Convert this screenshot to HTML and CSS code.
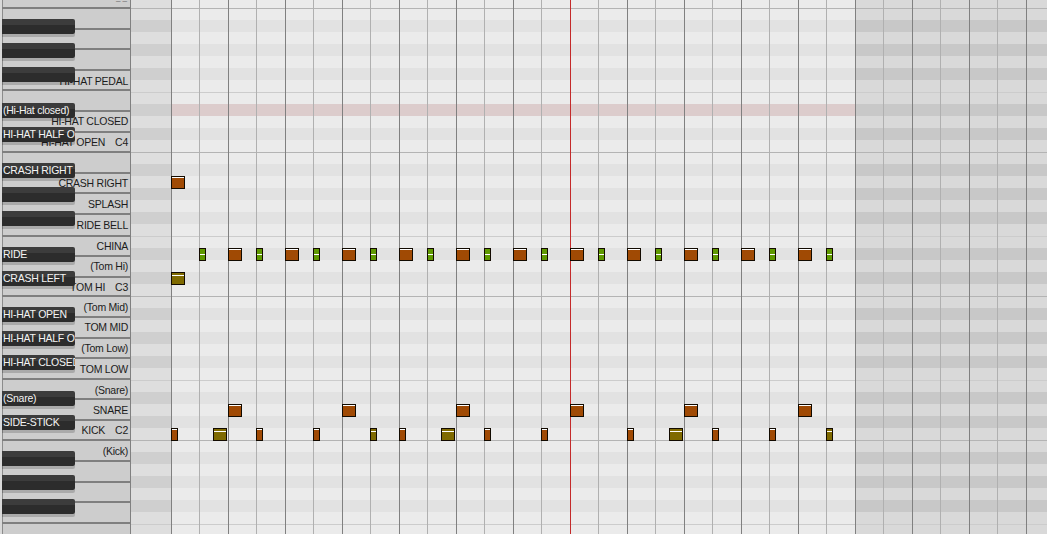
FILE: index.html
```html
<!DOCTYPE html>
<html lang="en">
<head>
<meta charset="utf-8">
<title>Drum piano roll</title>
<link rel="stylesheet" href="styles.css">
</head>
<body>
<div class="roll">
  <aside class="piano">
    <div class="whites">
      <div class="wk cut"><span class="clipped">_ _</span></div>
      <div class="wk"></div>
      <div class="wk"></div>
      <div class="wk"></div>
      <div class="wk low"><span>HI-HAT PEDAL</span></div>
      <div class="wk"></div>
      <div class="wk"><span>HI-HAT CLOSED</span></div>
      <div class="wk"><span>HI-HAT OPEN<i>C4</i></span></div>
      <div class="wk"></div>
      <div class="wk"><span>CRASH RIGHT</span></div>
      <div class="wk"><span>SPLASH</span></div>
      <div class="wk tall"><span>RIDE BELL</span></div>
      <div class="wk"><span>CHINA</span></div>
      <div class="wk"><span>(Tom Hi)</span></div>
      <div class="wk short"><span>TOM HI<i>C3</i></span></div>
      <div class="wk"><span>(Tom Mid)</span></div>
      <div class="wk"><span>TOM MID</span></div>
      <div class="wk"><span>(Tom Low)</span></div>
      <div class="wk low"><span>TOM LOW</span></div>
      <div class="wk low"><span>(Snare)</span></div>
      <div class="wk"><span>SNARE</span></div>
      <div class="wk"><span>KICK<i>C2</i></span></div>
      <div class="wk"><span>(Kick)</span></div>
      <div class="wk"></div>
      <div class="wk"></div>
      <div class="wk"></div>
      <div class="wk"></div>
    </div>
    <div class="blacks">
      <div class="bk"></div>
      <div class="bk"></div>
      <div class="bk gap"></div>
      <div class="bk"><span>(Hi-Hat closed)</span></div>
      <div class="bk gap"><span>HI-HAT HALF OPEN</span></div>
      <div class="bk"><span>CRASH RIGHT</span></div>
      <div class="bk"></div>
      <div class="bk gap"></div>
      <div class="bk"><span>RIDE</span></div>
      <div class="bk gap"><span>CRASH LEFT</span></div>
      <div class="bk"><span>HI-HAT OPEN</span></div>
      <div class="bk"><span>HI-HAT HALF OPEN</span></div>
      <div class="bk gap"><span>HI-HAT CLOSED</span></div>
      <div class="bk"><span>(Snare)</span></div>
      <div class="bk gap"><span>SIDE-STICK</span></div>
      <div class="bk"></div>
      <div class="bk"></div>
      <div class="bk"></div>
    </div>
  </aside>
  <main class="grid">
    <div class="rows">
      <div class="r w"></div>
      <div class="r w c"></div><div class="r k"></div><div class="r w"></div><div class="r k"></div><div class="r w"></div><div class="r k"></div><div class="r w"></div>
      <div class="r w f"></div><div class="r k hot"></div><div class="r w"></div><div class="r k"></div><div class="r w"></div>
      <div class="r w c"></div><div class="r k"></div><div class="r w"></div><div class="r k"></div><div class="r w"></div><div class="r k"></div><div class="r w"></div>
      <div class="r w f"></div><div class="r k"></div><div class="r w"></div><div class="r k"></div><div class="r w"></div>
      <div class="r w c"></div><div class="r k"></div><div class="r w"></div><div class="r k"></div><div class="r w"></div><div class="r k"></div><div class="r w"></div>
      <div class="r w f"></div><div class="r k"></div><div class="r w"></div><div class="r k"></div><div class="r w"></div>
      <div class="r w c"></div><div class="r k"></div><div class="r w"></div><div class="r k"></div><div class="r w"></div><div class="r k"></div><div class="r w"></div>
      <div class="r w f"></div>
    </div>
    <div class="lines"></div>
    <div class="cursor"></div>
    <div class="notes" id="notes"></div>
  </main>
</div>
<script src="notes.js"></script>
</body>
</html>
```
FILE: styles.css
```css
* { box-sizing: border-box; }
html, body { margin: 0; height: 100%; overflow: hidden; background: #ebebeb; }
.roll { display: flex; width: 1047px; height: 534px; overflow: hidden; font-family: "Liberation Sans", Arial, sans-serif; font-size: 10.5px; letter-spacing: -0.25px; }

.piano { position: relative; flex: 0 0 131px; height: 534px; background: #cdcdcd; border-left: 2px solid #d9d9d9; border-right: 1px solid #808080; overflow: hidden; box-shadow: inset 1px 0 0 #8c8c8c; }
.whites { display: flex; flex-direction: column; margin-top: -12px; }
.wk { flex: 0 0 auto; height: 20.6px; border-bottom: 2px solid #7f7f7f; display: flex; align-items: center; justify-content: flex-end; padding: 0 2px 0 0; color: #1c1c1c; white-space: nowrap; }
.wk.cut { height: 21px; }
.wk.tall { height: 21.6px; }
.wk.short { height: 19.6px; }
.wk.low { padding-top: 2px; }
.wk i { font-style: normal; margin-left: 10px; }
.clipped { font-weight: bold; color: #000; font-size: 8px; letter-spacing: 0; transform: translate(-1px, 1px); }

.blacks { position: absolute; left: 0; top: 19px; width: 73px; display: flex; flex-direction: column; }
.bk { flex: 0 0 15px; margin-bottom: 9px; background: linear-gradient(#3c3c3c 0 6px, #2c2c2c 6px); border-radius: 0 2px 2px 0; color: #f4f4f4; padding: 0 0 0 1px; line-height: 14px; overflow: hidden; white-space: nowrap; box-shadow: 0 3px 0 rgba(0, 0, 0, 0.17); }
.bk.gap { margin-bottom: 21px; }

.grid { position: relative; flex: 1 1 auto; height: 534px; overflow: hidden; }
.rows { display: flex; flex-direction: column; margin-top: -4px; }
.r { flex: 0 0 12px; position: relative; background: linear-gradient(90deg, var(--l) 0 40px, var(--m) 40px 724px, var(--d) 724px); }
.r.w { --l: #dedede; --m: #ebebeb; --d: #d9d9d9; }
.r.k { --l: #cfcfcf; --m: #e2e2e2; --d: #c8c8c8; }
.r.hot { --m: #dccccc; }
.r.c { box-shadow: inset 0 1px 0 #b4b4b4; }
.r.f { box-shadow: inset 0 1px 0 #cccccc; }

.lines { position: absolute; inset: 0 0 0 40px; background:
  repeating-linear-gradient(90deg, #808080 0 1px, transparent 1px 57px),
  repeating-linear-gradient(90deg, transparent 0 28px, #b0b0b0 28px 29px, transparent 29px 57px); }
.cursor { position: absolute; left: 439px; top: 0; bottom: 0; width: 1px; background: #c42a2a; }

.notes { position: absolute; inset: 0; }
.note { position: absolute; width: 14px; height: 13px; border: 1px solid #120a00; background: var(--c); }
.note::after { content: ""; position: absolute; left: 0; right: 0; top: var(--dash, 0); height: 1px; background: #fff; }
.note.o { --c: #a04a04; }
.note.y { --c: #7f6a00; --dash: 2px; }
.note.n { width: 7px; }
.note.g { width: 7px; --c: #5f9900; --dash: 5px; }
```
FILE: notes.js
```js
var data = [];
function add(t, x, y) { data.push([t, x, y]); }
add('o', 171, 176);
add('y', 171, 272);
[228, 285, 342, 399, 456, 513, 570, 627, 684, 741, 798].forEach(function (x) { add('o', x, 248); });
[199, 256, 313, 370, 427, 484, 541, 598, 655, 712, 769, 826].forEach(function (x) { add('g', x, 248); });
[228, 342, 456, 570, 684, 798].forEach(function (x) { add('o', x, 404); });
[171, 256, 313, 399, 484, 541, 627, 712, 769].forEach(function (x) { add('o n', x, 428); });
[370, 826].forEach(function (x) { add('y n', x, 428); });
[213, 441, 669].forEach(function (x) { add('y', x, 428); });
var host = document.getElementById('notes');
data.forEach(function (d) {
  var n = document.createElement('div');
  n.className = 'note ' + d[0];
  n.style.left = (d[1] - 131) + 'px';
  n.style.top = d[2] + 'px';
  host.appendChild(n);
});
```
